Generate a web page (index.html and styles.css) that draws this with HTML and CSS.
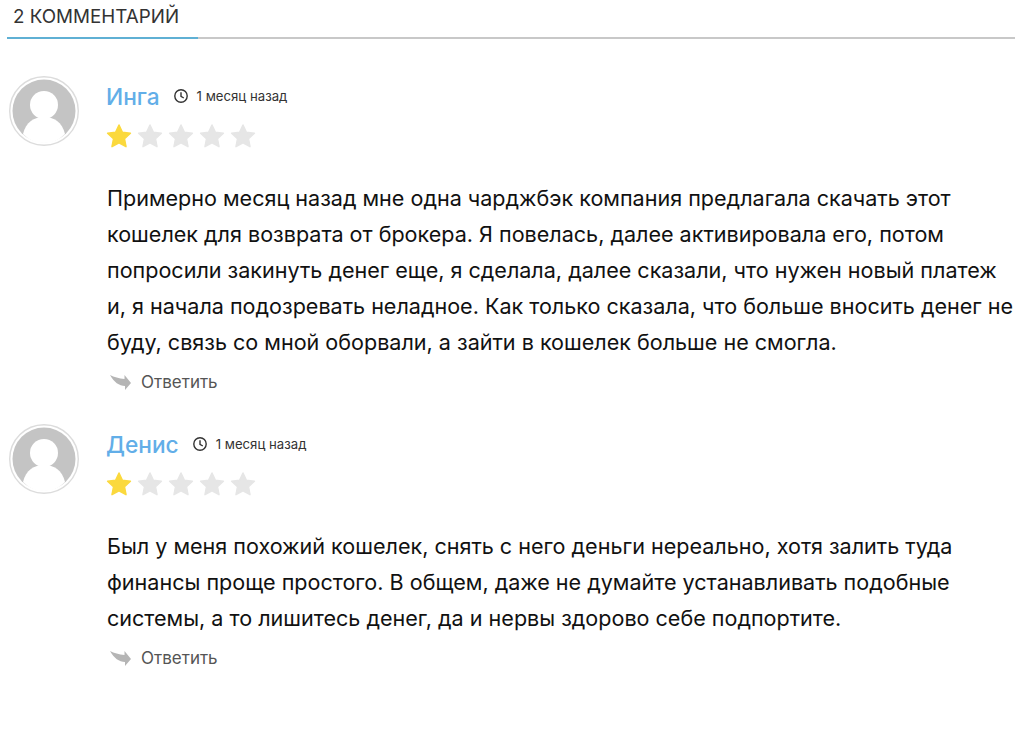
FILE: index.html
```html
<!DOCTYPE html>
<html lang="ru">
<head>
  <meta charset="UTF-8">
  <title>Комментарии</title>
  <link rel="stylesheet" href="styles.css">
</head>
<body>
  <div class="comments">
    <div class="comments-title"><span>2 КОММЕНТАРИЙ</span></div>

    <div class="comment">
      <svg class="avatar" viewBox="0 0 70 70">
        <circle cx="35" cy="35" r="34.3" fill="#fff" stroke="#dcdcdc" stroke-width="1.4"/>
        <circle cx="35" cy="35" r="31.5" fill="#c4c4c4"/>
        <circle cx="35" cy="29" r="14" fill="#fff"/>
        <path d="M14 58C17 46 25 41 35 41C45 41 53 46 56 58C50 64 43 67 35 67C27 67 20 64 14 58Z" fill="#fff"/>
      </svg>
      <div class="comment-body">
        <div class="comment-head">
          <span class="comment-author">Инга</span>
          <svg class="clock" viewBox="0 0 16 16">
            <circle cx="8" cy="8" r="6.2" fill="none" stroke="#333" stroke-width="1.4"/>
            <path d="M8 4.2V8.4L10.8 10" fill="none" stroke="#333" stroke-width="1.4"/>
          </svg>
          <span class="comment-date">1 месяц назад</span>
        </div>
        <div class="stars">
          <svg class="star star-on" viewBox="0 0 26 26"><path d="M13 2L16.4 9.3L24.4 10.3L18.5 15.8L20 23.7L13 19.8L6 23.7L7.5 15.8L1.6 10.3L9.6 9.3Z"/></svg>
          <svg class="star" viewBox="0 0 26 26"><path d="M13 2L16.4 9.3L24.4 10.3L18.5 15.8L20 23.7L13 19.8L6 23.7L7.5 15.8L1.6 10.3L9.6 9.3Z"/></svg>
          <svg class="star" viewBox="0 0 26 26"><path d="M13 2L16.4 9.3L24.4 10.3L18.5 15.8L20 23.7L13 19.8L6 23.7L7.5 15.8L1.6 10.3L9.6 9.3Z"/></svg>
          <svg class="star" viewBox="0 0 26 26"><path d="M13 2L16.4 9.3L24.4 10.3L18.5 15.8L20 23.7L13 19.8L6 23.7L7.5 15.8L1.6 10.3L9.6 9.3Z"/></svg>
          <svg class="star" viewBox="0 0 26 26"><path d="M13 2L16.4 9.3L24.4 10.3L18.5 15.8L20 23.7L13 19.8L6 23.7L7.5 15.8L1.6 10.3L9.6 9.3Z"/></svg>
        </div>
        <p class="comment-text">Примерно месяц назад мне одна чарджбэк компания предлагала скачать этот<br>кошелек для возврата от брокера. Я повелась, далее активировала его, потом<br>попросили закинуть денег еще, я сделала, далее сказали, что нужен новый платеж<br>и, я начала подозревать неладное. Как только сказала, что больше вносить денег не<br>буду, связь со мной оборвали, а зайти в кошелек больше не смогла.</p>
        <div class="comment-reply">
          <svg class="reply-icon" viewBox="0 0 21 16">
            <path d="M0 1C4 3 9 4.5 14.5 5V1L21 9L15 16V12C9 12 4 8 0 1Z"/>
          </svg>
          <span>Ответить</span>
        </div>
      </div>
    </div>

    <div class="comment">
      <svg class="avatar" viewBox="0 0 70 70">
        <circle cx="35" cy="35" r="34.3" fill="#fff" stroke="#dcdcdc" stroke-width="1.4"/>
        <circle cx="35" cy="35" r="31.5" fill="#c4c4c4"/>
        <circle cx="35" cy="29" r="14" fill="#fff"/>
        <path d="M14 58C17 46 25 41 35 41C45 41 53 46 56 58C50 64 43 67 35 67C27 67 20 64 14 58Z" fill="#fff"/>
      </svg>
      <div class="comment-body">
        <div class="comment-head">
          <span class="comment-author">Денис</span>
          <svg class="clock" viewBox="0 0 16 16">
            <circle cx="8" cy="8" r="6.2" fill="none" stroke="#333" stroke-width="1.4"/>
            <path d="M8 4.2V8.4L10.8 10" fill="none" stroke="#333" stroke-width="1.4"/>
          </svg>
          <span class="comment-date">1 месяц назад</span>
        </div>
        <div class="stars">
          <svg class="star star-on" viewBox="0 0 26 26"><path d="M13 2L16.4 9.3L24.4 10.3L18.5 15.8L20 23.7L13 19.8L6 23.7L7.5 15.8L1.6 10.3L9.6 9.3Z"/></svg>
          <svg class="star" viewBox="0 0 26 26"><path d="M13 2L16.4 9.3L24.4 10.3L18.5 15.8L20 23.7L13 19.8L6 23.7L7.5 15.8L1.6 10.3L9.6 9.3Z"/></svg>
          <svg class="star" viewBox="0 0 26 26"><path d="M13 2L16.4 9.3L24.4 10.3L18.5 15.8L20 23.7L13 19.8L6 23.7L7.5 15.8L1.6 10.3L9.6 9.3Z"/></svg>
          <svg class="star" viewBox="0 0 26 26"><path d="M13 2L16.4 9.3L24.4 10.3L18.5 15.8L20 23.7L13 19.8L6 23.7L7.5 15.8L1.6 10.3L9.6 9.3Z"/></svg>
          <svg class="star" viewBox="0 0 26 26"><path d="M13 2L16.4 9.3L24.4 10.3L18.5 15.8L20 23.7L13 19.8L6 23.7L7.5 15.8L1.6 10.3L9.6 9.3Z"/></svg>
        </div>
        <p class="comment-text">Был у меня похожий кошелек, снять с него деньги нереально, хотя залить туда<br>финансы проще простого. В общем, даже не думайте устанавливать подобные<br>системы, а то лишитесь денег, да и нервы здорово себе подпортите.</p>
        <div class="comment-reply">
          <svg class="reply-icon" viewBox="0 0 21 16">
            <path d="M0 1C4 3 9 4.5 14.5 5V1L21 9L15 16V12C9 12 4 8 0 1Z"/>
          </svg>
          <span>Ответить</span>
        </div>
      </div>
    </div>
  </div>
</body>
</html>
```

FILE: styles.css
```css
body {
  margin: 0;
  background-color: #fff;
  color: #111;
  font-family: "Inter", "Noto Sans", sans-serif;
}

.comments {
  padding: 0 9px 0 7px;
}

.comments-title {
  height: 37px;
  border-bottom: 2px solid #c8c8c8;
}

.comments-title span {
  display: block;
  width: 185px;
  height: 37px;
  padding-left: 6px;
  border-bottom: 2px solid #5fb0d4;
  color: #333;
  font-size: 18.8px;
  line-height: 33px;
}

.comment {
  display: flex;
  margin-bottom: 32px;
}

.comments-title + .comment {
  margin-top: 37px;
}

.avatar {
  flex: none;
  width: 70px;
  height: 70px;
  margin: 0 0 0 2px;
}

.comment-body {
  margin-left: 28px;
}

.comment-head {
  display: flex;
  align-items: center;
  height: 40px;
}

.comment-author {
  color: #62aee8;
  font-size: 22.7px;
  font-weight: 500;
  margin: 0 13px 0 -1px;
}

.clock {
  width: 16px;
  height: 16px;
  margin-right: 8px;
}

.comment-date {
  color: #333;
  font-size: 13.2px;
}

.stars {
  display: flex;
  gap: 5px;
  height: 26px;
  margin: 7px 0 0 -1px;
}

.star {
  width: 26px;
  height: 26px;
  fill: #e6e6e6;
  stroke: #e6e6e6;
  stroke-width: 1.5;
  stroke-linejoin: round;
}

.star-on {
  fill: #fbd93d;
  stroke: #fbd93d;
}

.comment-text {
  margin: 31px 0 0;
  font-size: 21.55px;
  line-height: 36px;
  white-space: nowrap;
}

.comment-reply {
  display: flex;
  align-items: center;
  gap: 10px;
  margin: 12px 0 0 3px;
  color: #555;
  font-size: 17px;
}

.reply-icon {
  width: 21px;
  height: 16px;
  fill: #b5b5b5;
}
```
